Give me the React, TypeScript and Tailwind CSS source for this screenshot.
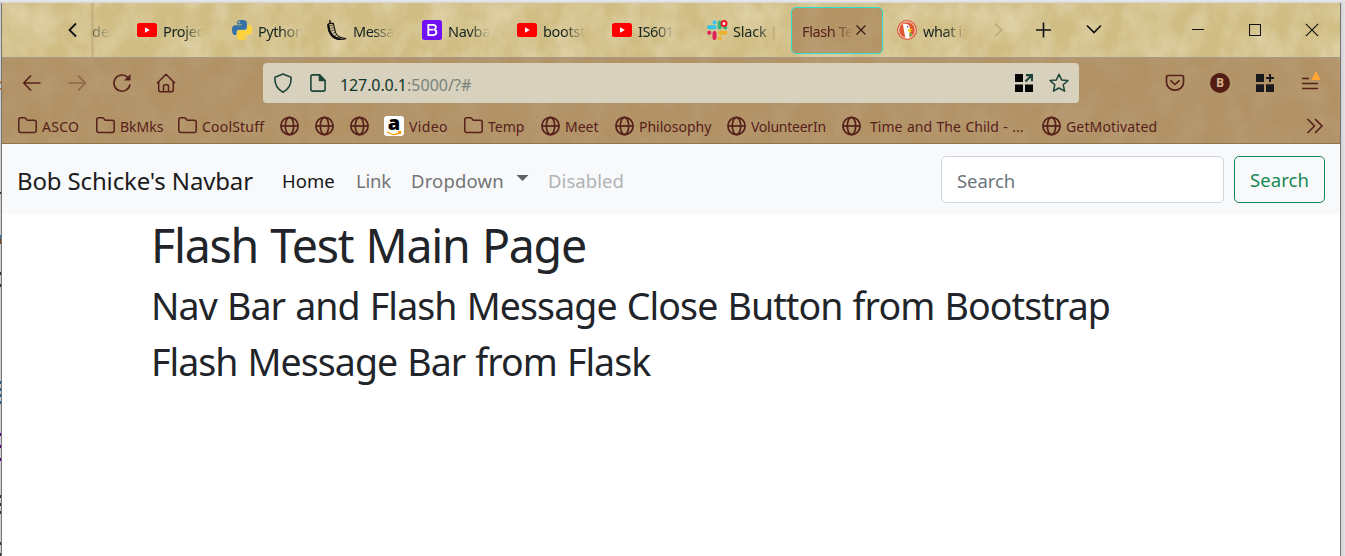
import React from "react";

const PYTHON =
  "M14.25.18l.9.2.73.26.59.3.45.32.34.34.25.34.16.33.1.3.04.26.02.2-.01.13V8.5l-.05.63-.13.55-.21.46-.26.38-.3.31-.33.25-.35.19-.35.14-.33.1-.3.07-.26.04-.21.02H8.77l-.69.05-.59.14-.5.22-.41.27-.33.32-.27.35-.2.36-.15.37-.1.35-.07.32-.04.27-.02.21v3.06H3.17l-.21-.03-.28-.07-.32-.12-.35-.18-.36-.26-.36-.36-.35-.46-.32-.59-.28-.73-.21-.88-.14-1.05-.05-1.23.06-1.22.16-1.04.24-.87.32-.71.36-.57.4-.44.42-.33.42-.24.4-.16.36-.1.32-.05.24-.01h.16l.06.01h8.16v-.83H6.18l-.01-2.75-.02-.37.05-.34.11-.31.17-.28.25-.26.31-.23.38-.2.44-.18.51-.15.58-.12.64-.1.71-.06.77-.04.84-.02 1.27.05zm-6.3 1.98l-.23.33-.08.41.08.41.23.34.33.22.41.09.41-.09.33-.22.23-.34.08-.41-.08-.41-.23-.33-.33-.22-.41-.09-.41.09z";

const YouTube = () => (
  <svg width="20" height="20" viewBox="0 0 20 20">
    <rect x="0" y="3" width="20" height="14" rx="2.6" fill="#f00" />
    <path d="M8 7.2v5.6l4.8-2.8z" fill="#fff" />
  </svg>
);

const Python = () => (
  <svg width="20" height="20" viewBox="0 0 24 24">
    <path d={PYTHON} fill="#3572a5" />
    <path d={PYTHON} fill="#ffd43b" transform="rotate(180 12 12)" />
  </svg>
);

const Flask = () => (
  <svg width="20" height="20" viewBox="0 0 20 20" fill="none" stroke="#15130f" strokeLinecap="round">
    <path d="M2.8.8l.6 2.4M1 4.400l2.200-1.200 3 .3" strokeWidth="1.500" />
    <path d="M1.200 4.600C.4 11 4 19 12.600 19.400c2.400.1 4.600-.1 6.600-.9-4.600-.2-7.800-1.400-9.800-4.200C7.500 11.500 7.800 7 6.300 3.800" strokeWidth="1.100" />
    <path d="M1.500 5.500C1.500 11 4.800 17.800 12.500 19" strokeWidth="2.300" />
    <path d="M3.500 6l2.700-.9M4 8.500l2.800-1M4.600 11l2.800-1.200M6 13.400l2.500-1.400M8 15.800l2-1.600M10.500 17.500l1.500-1.300" strokeWidth=".7" />
  </svg>
);

const BootstrapLogo = () => (
  <svg width="20" height="20" viewBox="0 0 20 20">
    <rect width="20" height="20" rx="2.500" fill="#7210f5" />
    <path
      d="M6.300 4.800h4.500c2 0 3.100 1 3.100 2.500 0 1.300-.8 2.100-1.800 2.400 1.400.2 2.300 1.200 2.300 2.600 0 1.800-1.300 2.900-3.500 2.900H6.300zM7 9.700h4.500"
      fill="none"
      stroke="#fff"
      strokeWidth="1.800"
    />
  </svg>
);

const Slack = () => (
  <svg width="22" height="21" viewBox="0 0 22 21">
    <g strokeWidth="4" strokeLinecap="round">
      <path d="M7.500 2.300v.1" stroke="#36c5f0" />
      <path d="M2 7.200h5.600" stroke="#36c5f0" />
      <path d="M12.700 2.500v5" stroke="#2eb67d" />
      <path d="M18.200 7.600h.1" stroke="#2eb67d" />
      <path d="M13 12.800h5.300" stroke="#ecb22e" />
      <path d="M12.900 18v.2" stroke="#ecb22e" />
      <path d="M7.500 13v5" stroke="#e01e5a" />
      <path d="M2.200 12.800h.1" stroke="#e01e5a" />
    </g>
    <circle cx="17" cy="3.500" r="2.500" fill="#fff" stroke="#f0141e" strokeWidth="2" />
  </svg>
);

const Duck = () => (
  <svg width="20" height="20" viewBox="0 0 20 20">
    <circle cx="10" cy="10" r="10" fill="#de5833" />
    <circle cx="10" cy="10" r="8.300" fill="none" stroke="#f7e3da" strokeWidth="1" />
    <path d="M5.600 4.500c2-1.600 5.600-.9 6.700 1.500.6 1.500.4 2.600.6 4 .3 1.800-.6 3-.6 4.500l.4 3.600c-1.500.4-3 .2-4.300-.3C7.700 14.500 6.900 10.500 6.500 8 6.300 6.500 6.600 5.500 5.600 4.500z" fill="#fff" />
    <path d="M11 9.400c1.700-.7 3.700-.7 4.200-.2.300.7-1.900.9-2.400 1.400 1 .5 2.200.6 2 1-.9.700-3.300.3-4-.5z" fill="#fdd20a" />
    <path d="M12.300 14l2.700-.9v3l-2.700-.6z" fill="#65bc46" />
    <circle cx="10.600" cy="6.700" r=".8" fill="#2d4f8e" />
  </svg>
);

const Folder = () => (
  <svg width="19" height="17" viewBox="0 0 19 17" fill="none" stroke="#56201a" strokeWidth="1.500" strokeLinejoin="round">
    <path d="M.8 13.600V2.800c0-1.100.9-2 2-2h3.500c.7 0 1.200.3 1.600.8l1.300 1.600h7c1.100 0 2 .9 2 2v8.400c0 1.100-.9 2-2 2H2.800c-1.100 0-2-.9-2-2z" />
  </svg>
);

const Globe = () => (
  <svg width="20" height="20" viewBox="0 0 20 20" fill="none" stroke="#56201a" strokeWidth="1.700">
    <circle cx="9.500" cy="10" r="8.600" />
    <ellipse cx="9.500" cy="10" rx="4.200" ry="8.600" />
    <path d="M.9 10h17.200" />
  </svg>
);

const Amazon = () => (
  <span className="flex h-5 w-5 flex-col items-center rounded-[3px] bg-white">
    <span className="h-[15px] font-['Open_Sans',sans-serif] text-[20px] leading-[13px] font-extrabold tracking-normal text-black">a</span>
    <svg width="16" height="5" viewBox="0 0 16 5" fill="none" stroke="#f90" strokeWidth="1.300">
      <path d="M1 .8c4 3.400 9 3.400 13 .6M12 .7h2.600l-.5 2.300" />
    </svg>
  </span>
);

const tabs = [
  { label: "Projec", icon: <YouTube />, track: "tracking-[-0.3px]" },
  { label: "Python", icon: <Python />, track: "tracking-[-0.45px]" },
  { label: "Messa", icon: <Flask />, track: "tracking-[-0.5px]" },
  { label: "Navba", icon: <BootstrapLogo />, track: "tracking-[-0.3px]" },
  { label: "bootst", icon: <YouTube />, track: "tracking-[-0.3px]" },
  { label: "IS601", icon: <YouTube />, track: "tracking-[-0.4px]" },
  { label: "Slack |", icon: <Slack />, track: "tracking-[-0.2px]" },
];

type Bookmark = { icon: React.ReactNode; label?: string; box: string; text?: string };
const bookmarks: Bookmark[] = [
  { icon: <Folder />, label: "ASCO", box: "w-[78px]", text: "tracking-[0.3px]" },
  { icon: <Folder />, label: "BkMks", box: "w-[82px]" },
  { icon: <Folder />, label: "CoolStuff", box: "w-[102px]", text: "tracking-[0.2px]" },
  { icon: <Globe />, box: "w-[35px]" },
  { icon: <Globe />, box: "w-[35px]" },
  { icon: <Globe />, box: "w-[34px]" },
  { icon: <Amazon />, label: "Video", box: "w-[80px]", text: "tracking-[0.4px]" },
  { icon: <Folder />, label: "Temp", box: "w-[77px]" },
  { icon: <Globe />, label: "Meet", box: "w-[74px]", text: "-ml-px" },
  { icon: <Globe />, label: "Philosophy", box: "w-[112px]", text: "-ml-px" },
  { icon: <Globe />, label: "VolunteerIn", box: "w-[115px]", text: "-ml-px tracking-[-0.25px]" },
  { icon: <Globe />, label: "Time and The Child - ...", box: "w-[200px]", text: "pl-[3px] tracking-[0.02px] [word-spacing:0.8px]" },
  { icon: <Globe />, label: "GetMotivated", box: "w-[140px]", text: "-ml-px tracking-[0.15px]" },
];

const Parchment = () => (
  <svg className="absolute inset-0" width="1338" height="141">
    <defs>
      <filter id="grain" x="0" y="0" width="100%" height="100%">
        <feTurbulence type="fractalNoise" baseFrequency="0.04 0.03" numOctaves="5" seed="8" />
        <feColorMatrix values="0 0 0 0 0.93  0 0 0 0 0.89  0 0 0 0 0.74  1.4 0 0 0 -0.45" />
      </filter>
    </defs>
    <rect width="1338" height="141" fill="#d0bd84" />
    <rect width="1338" height="141" filter="url(#grain)" opacity=".5" />
    <rect y="55" width="1338" height="86" fill="#9d7550" opacity=".6" />
    <rect y="54" width="1338" height="1" fill="#a5998b" />
    <rect y="140" width="1338" height="1" fill="#8d7650" />
  </svg>
);

function TabStrip() {
  return (
    <div className="flex h-[54px] items-center text-[14.5px] text-[#15241c]">
      <div className="flex w-[89px] items-center pl-[65px]">
        <svg width="11" height="18" viewBox="0 0 11 18" fill="none" stroke="#111" strokeWidth="1.800">
          <path d="M9 2.500L2.500 9 9 15.500" />
        </svg>
      </div>
      <div className="flex h-full w-[36px] items-center border-l-[3px] border-[#b9a473]/50">
        <span className="-ml-[2px] pt-1 opacity-60 [mask-image:linear-gradient(90deg,#000,transparent)]">de:</span>
      </div>
      {tabs.map((t, i) => (
        <div key={i} className="flex w-[95px] shrink-0 items-center pl-[10px]">
          <span className="w-5 shrink-0">{t.icon}</span>
          <span className={"ml-[6px] pt-1 whitespace-nowrap [mask-image:linear-gradient(90deg,#000_50%,transparent)] " + t.track}>
            {t.label}
          </span>
        </div>
      ))}
      <div className="-ml-px flex h-[47px] w-[92px] shrink-0 items-center rounded-[5px] border border-[#2fe0cf] bg-[#a07850]/60 pl-[10px] text-[#56201a]">
        <span className="w-[51px] pt-1 tracking-[-0.4px] whitespace-nowrap [mask-image:linear-gradient(90deg,#000_60%,transparent)]">
          Flash Te
        </span>
        <svg className="ml-[2px]" width="12" height="12" viewBox="0 0 12 12" stroke="#3c1a15" strokeWidth="1.200">
          <path d="M1.500 1.500l9 9M10.500 1.500l-9 9" />
        </svg>
      </div>
      <div className="flex w-[108px] items-center pl-[14px]">
        <Duck />
        <span className="ml-[6px] pt-1 tracking-[-0.4px] whitespace-nowrap [mask-image:linear-gradient(90deg,#000_50%,transparent)]">
          what i:
        </span>
      </div>
      <svg width="14" height="18" viewBox="0 0 14 18" fill="none" stroke="#b9aa77" strokeWidth="1.600">
        <path d="M4 2.500l6.500 6.500L4 15.500" />
      </svg>
      <svg className="ml-[30px]" width="16" height="16" viewBox="0 0 16 16" stroke="#111" strokeWidth="1.600">
        <path d="M8.500 .5v15M1 8h15" />
      </svg>
      <svg className="mb-[2px] ml-[34px]" width="18" height="12" viewBox="0 0 18 12" fill="none" stroke="#111" strokeWidth="1.700">
        <path d="M2 2.500l7 7 7-7" />
      </svg>
      <svg className="ml-[88px]" width="14" height="14" viewBox="0 0 14 14" stroke="#111">
        <path d="M1 6.500h12" />
      </svg>
      <svg className="ml-[43px]" width="14" height="14" viewBox="0 0 14 14" fill="none" stroke="#111">
        <rect x="1.500" y="1.500" width="11" height="11" />
      </svg>
      <svg className="ml-[43px]" width="14" height="14" viewBox="0 0 14 14" stroke="#111" strokeWidth="1.100">
        <path d="M.8.800l12.400 12.400M13.200.800L.800 13.200" />
      </svg>
    </div>
  );
}

function AddressRow() {
  return (
    <div className="flex h-[52px] items-center text-[#56201a]">
      <svg className="ml-5" width="20" height="18" viewBox="0 0 20 18" fill="none" stroke="currentColor" strokeWidth="1.600">
        <path d="M9 1.500L1.800 9 9 16.500M1.800 9H18.500" />
      </svg>
      <svg className="ml-[25px] opacity-40" width="20" height="18" viewBox="0 0 20 18" fill="none" stroke="currentColor" strokeWidth="1.600">
        <path d="M11 1.500L18.200 9 11 16.500M18.200 9H1.500" />
      </svg>
      <svg className="ml-[25px]" width="20" height="20" viewBox="0 0 20 20" fill="none" stroke="currentColor" strokeWidth="1.600">
        <path d="M18 11.500A8.100 8.100 0 1 1 15.800 4.400" />
        <path d="M18.500 1v6.500H12z" fill="currentColor" stroke="none" />
      </svg>
      <svg className="ml-[24px]" width="20" height="20" viewBox="0 0 20 20" fill="none" stroke="currentColor" strokeWidth="1.500" strokeLinejoin="round">
        <path d="M1 10.200L10 1.300l9 8.900M2.700 8.800v8c0 1 .8 1.900 1.900 1.900h10.800c1 0 1.900-.8 1.900-1.900v-8M7.500 18.500v-5.200c0-1 .8-1.600 1.600-1.600h1.800c.9 0 1.600.7 1.600 1.600v5.200" />
      </svg>
      <div className="ml-[87px] flex h-10 w-[816px] items-center rounded-[4px] bg-[#d7d1bd] text-[16px]">
        <svg className="ml-[10px]" width="20" height="20" viewBox="0 0 20 20" fill="none" stroke="#1d4539" strokeWidth="1.600" strokeLinejoin="round">
          <path d="M10 1l8 3.200c.6 7-2 12-8 15-6-3-8.600-8-8-15z" />
        </svg>
        <svg className="ml-[17px]" width="16" height="18" viewBox="0 0 16 18" fill="none" stroke="#1d4539" strokeWidth="1.600" strokeLinejoin="round">
          <path d="M9.500.900H2.800c-1 0-1.900.8-1.900 1.900v12.400c0 1 .8 1.900 1.900 1.900h10.400c1 0 1.900-.8 1.900-1.900V6.500z" />
          <path d="M9.500 1v5.500H15z" fill="#1d4539" />
        </svg>
        <span className="ml-[14px] pt-[3px] tracking-[-0.1px] text-[#12362c]">127.0.0.1</span>
        <span className="pt-[3px] tracking-[0.05px] text-[#76827b]">:5000/?#</span>
        <svg className="ml-auto" width="18" height="18" viewBox="0 0 18 18">
          <path d="M0 0h8v8H0zM0 10.500h8V18H0zM10 10.500h8V18h-8z" fill="#050505" />
          <path d="M10.500 7.500l6-6M11 1.200h6v6" fill="none" stroke="#1d4539" strokeWidth="2.200" />
        </svg>
        <svg className="mr-[10px] ml-4" width="20" height="20" viewBox="0 0 20 20" fill="none" stroke="#1d4539" strokeWidth="1.500" strokeLinejoin="round">
          <path d="M10 1.200l2.600 5.700 6.300.7-4.700 4.200 1.400 6.400L10 15l-5.600 3.200 1.400-6.400L1.100 7.600l6.300-.7z" />
        </svg>
      </div>
      <svg className="ml-[86px]" width="20" height="18" viewBox="0 0 20 18" fill="none" stroke="currentColor" strokeWidth="1.700" strokeLinejoin="round">
        <path d="M3 1.500h14c.8 0 1.500.7 1.500 1.500v5.200a8.500 8 0 0 1-17 0V3c0-.8.700-1.500 1.500-1.500z" />
        <path d="M5.500 6.300L10 10.500l4.500-4.200" />
      </svg>
      <span className="ml-[25px] flex h-5 w-5 items-center justify-center rounded-full bg-[#521c15] font-['Open_Sans',sans-serif] text-[12px] leading-none font-bold text-[#d5b58b]">
        B
      </span>
      <svg className="ml-[26px]" width="18" height="18" viewBox="0 0 18 18" fill="#1a1a1c">
        <path d="M0 0h8v8H0zM0 10.300h8V18H0zM10 10.300h8V18h-8zM13 0h2v3h3v2h-3v3h-2V5h-3V3h3z" />
      </svg>
      <svg className="mb-[6px] ml-[27px]" width="20" height="22" viewBox="0 0 20 22">
        <path d="M1 9.500h7M1 14.500h16M1 19.500h16" stroke="currentColor" strokeWidth="1.500" />
        <path d="M15 3l4 7.500h-8z" fill="#ffa436" stroke="#ffa436" strokeWidth="1" strokeLinejoin="round" />
      </svg>
    </div>
  );
}

function BookmarkRow() {
  return (
    <div className="flex h-[33px] items-center pl-4 text-[14px] whitespace-nowrap text-[#56201a]">
      {bookmarks.map((b, i) => (
        <div key={i} className={"flex shrink-0 items-center " + b.box}>
          {b.icon}
          {b.label && (
            <span className="ml-[5px] pt-[2px]">
              <span className={"block " + (b.text ?? "")}>{b.label}</span>
            </span>
          )}
        </div>
      ))}
      <svg className="ml-[124px]" width="18" height="18" viewBox="0 0 18 18" fill="none" stroke="currentColor" strokeWidth="1.600">
        <path d="M1.500 2l7 7-7 7M9 2l7 7-7 7" />
      </svg>
    </div>
  );
}

export default function App() {
  return (
    <div className="flex h-[556px] w-[1345px] flex-col overflow-hidden bg-[#d9d9db] font-['Noto_Sans',sans-serif]">
      <div className="h-[3px] shrink-0 bg-linear-to-b from-[#ebebeb] to-[#d4d4d6]" />
      <div className="flex min-h-0 flex-1">
        <div className="w-px bg-[#d0d0d2]">
          <svg width="1" height="553">
            <path d="M.5 78v3M.5 85v2" stroke="#c5763f" />
            <path d="M.5 189v2M.5 269v3M.5 281v3M.5 492v3M.5 500v3M.5 508v3M.5 539v3M.5 550v3" stroke="#333" />
            <path d="M.5 232v4" stroke="#39689a" />
            <path d="M.5 236v5" stroke="#7b4526" />
            <path d="M.5 378v3M.5 385v3M.5 391v3M.5 398v3" stroke="#1c5e99" />
            <path d="M.5 430v3M.5 442v3M.5 455v3" stroke="#4b0082" />
          </svg>
        </div>
        <div className="w-px bg-[#757575]" />
        <div className="flex w-[1338px] flex-col bg-white">
          <header className="relative h-[141px]">
            <Parchment />
            <div className="relative">
              <TabStrip />
              <AddressRow />
              <BookmarkRow />
            </div>
          </header>
          <nav className="flex h-[70px] items-center bg-[#f8f9fb] pr-[15px] pl-[15px] text-[18.5px]">
            <span className="w-[265px] pt-[3px] text-[24px] tracking-[-0.15px] whitespace-nowrap text-[#1c1c1c]">Bob Schicke's Navbar</span>
            <span className="w-[74px] pt-[3px] text-[#161616]">Home</span>
            <span className="w-[55px] pt-[3px] tracking-[-0.2px] text-[#737475]">Link</span>
            <span className="w-[105px] pt-[3px] tracking-[0.15px] text-[#737475]">Dropdown</span>
            <svg className="mr-[19px] mb-[2px]" width="13" height="6" viewBox="0 0 13 6">
              <path d="M.5 0h12l-6 6z" fill="#5f6061" />
            </svg>
            <span className="pt-[3px] tracking-[0.05px] text-[#b1b2b3]">Disabled</span>
            <input
              placeholder="Search"
              className="ml-auto h-[47px] w-[283px] rounded-[5px] border border-[#ced4da] bg-white px-[15px] pt-[2px] tracking-[-0.05px] placeholder:text-[#6c757d]"
            />
            <button className="ml-[10px] h-[47px] w-[91px] rounded-[5px] border border-[#198754] pt-[2px] tracking-[0.1px] text-[#198754]">
              Search
            </button>
          </nav>
          <main className="pl-[149px] whitespace-nowrap text-[#212529]">
            <h1 className="mt-[2px] text-[46.500px] leading-[58px] tracking-[-1.250px] [word-spacing:1.5px]">Flash Test Main Page</h1>
            <h2 className="mt-[9px] text-[37.500px] leading-[46px] tracking-[-0.900px] [word-spacing:1.2px]">
              Nav Bar and Flash Message Close Button from Bootstrap
            </h2>
            <h2 className="mt-[10px] text-[37.500px] leading-[46px] tracking-[-0.950px] [word-spacing:1.2px]">Flash Message Bar from Flask</h2>
          </main>
        </div>
        <div className="w-px bg-[#757575]" />
        <div className="flex-1 bg-linear-to-r from-[#cfcfd1] to-[#e6e4e6]" />
      </div>
    </div>
  );
}
